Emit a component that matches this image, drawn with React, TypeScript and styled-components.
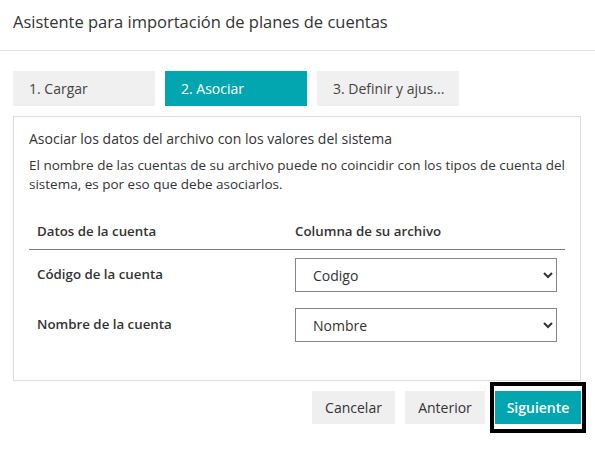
import React from "react";
import styled, { createGlobalStyle } from "styled-components";

const GlobalStyle = createGlobalStyle`
  html, body {
    margin: 0;
    padding: 0;
    background: #fff;
  }
  body {
    font-family: "Open Sans", "Liberation Sans", sans-serif;
    color: #333;
  }
  * {
    box-sizing: border-box;
  }
`;

const TEAL = "#02a6b0";

const Dialog = styled.div`
  width: 595px;
  height: 452px;
  background: #fff;
`;

const Header = styled.div`
  height: 51px;
  padding: 11px 13px 0;
  border-bottom: 1px solid #e3e3e3;
`;

const Title = styled.h1`
  margin: 0;
  font-size: 16.5px;
  line-height: 22px;
  font-weight: 400;
  color: #333;
`;

const Body = styled.div`
  padding: 20px 14px 0 13px;
`;

const Tabs = styled.div`
  display: flex;
  gap: 10px;
`;

const Tab = styled.div<{ active?: boolean }>`
  width: 142px;
  height: 35px;
  padding-left: 16px;
  font-size: 14px;
  line-height: 35px;
  background: ${({ active }) => (active ? TEAL : "#f0f0f0")};
  color: ${({ active }) => (active ? "#fff" : "#444")};
  white-space: nowrap;
`;

const Panel = styled.div`
  margin-top: 10px;
  height: 265px;
  border: 1px solid #dddddd;
  padding: 12px 15px 0;
`;

const PanelTitle = styled.h2`
  margin: 0;
  font-size: 14px;
  line-height: 20px;
  font-weight: 400;
  color: #333;
`;

const Description = styled.p`
  margin: 7px 0 0;
  font-size: 13.5px;
  line-height: 19px;
  color: #333;
`;

const Table = styled.div`
  margin-top: 19px;
  display: grid;
  grid-template-columns: 258px 1fr;
`;

const HeadCell = styled.div`
  height: 37px;
  padding: 0 8px;
  display: flex;
  align-items: center;
  font-size: 13.3px;
  font-weight: 600;
  color: #333;
  border-bottom: 1px solid #7a7a7a;
`;

const LabelCell = styled.div`
  height: 50px;
  padding: 0 8px 3px;
  display: flex;
  align-items: center;
  font-size: 13.3px;
  font-weight: 600;
  color: #333;
`;

const FieldCell = styled.div`
  height: 50px;
  padding: 8px;
`;

const Select = styled.select`
  width: 100%;
  height: 34px;
  padding: 0 8px 0 13px;
  border: 1px solid #858585;
  border-radius: 0;
  background: #fff;
  font-family: "Open Sans", "Liberation Sans", sans-serif;
  font-size: 14px;
  color: #333;
`;

const Footer = styled.div`
  margin-top: 10px;
  display: flex;
  justify-content: flex-end;
  gap: 10px;
`;

const Button = styled.button<{ primary?: boolean; width: number }>`
  width: ${({ width }) => width}px;
  height: 33px;
  padding: 0;
  border: none;
  border-radius: 0;
  font-family: "Open Sans", "Liberation Sans", sans-serif;
  font-size: 14px;
  font-weight: ${({ primary }) => (primary ? 600 : 400)};
  background: ${({ primary }) => (primary ? TEAL : "#efefef")};
  color: ${({ primary }) => (primary ? "#fff" : "#333")};
  cursor: pointer;
`;

const FocusRing = styled.div`
  display: flex;
  margin: -9px -5px;
  padding: 5px 1px;
  border: 4px solid #000;
`;

export default function App() {
  return (
    <Dialog>
      <GlobalStyle />
      <Header>
        <Title>Asistente para importación de planes de cuentas</Title>
      </Header>
      <Body>
        <Tabs>
          <Tab>1. Cargar</Tab>
          <Tab active>2. Asociar</Tab>
          <Tab>3. Definir y ajus...</Tab>
        </Tabs>
        <Panel>
          <PanelTitle>Asociar los datos del archivo con los valores del sistema</PanelTitle>
          <Description>
            El nombre de las cuentas de su archivo puede no coincidir con los tipos de cuenta del
            sistema, es por eso que debe asociarlos.
          </Description>
          <Table>
            <HeadCell>Datos de la cuenta</HeadCell>
            <HeadCell>Columna de su archivo</HeadCell>
            <LabelCell>Código de la cuenta</LabelCell>
            <FieldCell>
              <Select defaultValue="Codigo">
                <option>Codigo</option>
                <option>Nombre</option>
              </Select>
            </FieldCell>
            <LabelCell>Nombre de la cuenta</LabelCell>
            <FieldCell>
              <Select defaultValue="Nombre">
                <option>Codigo</option>
                <option>Nombre</option>
              </Select>
            </FieldCell>
          </Table>
        </Panel>
        <Footer>
          <Button width={83}>Cancelar</Button>
          <Button width={80}>Anterior</Button>
          <FocusRing>
            <Button primary width={86}>
              Siguiente
            </Button>
          </FocusRing>
        </Footer>
      </Body>
    </Dialog>
  );
}
